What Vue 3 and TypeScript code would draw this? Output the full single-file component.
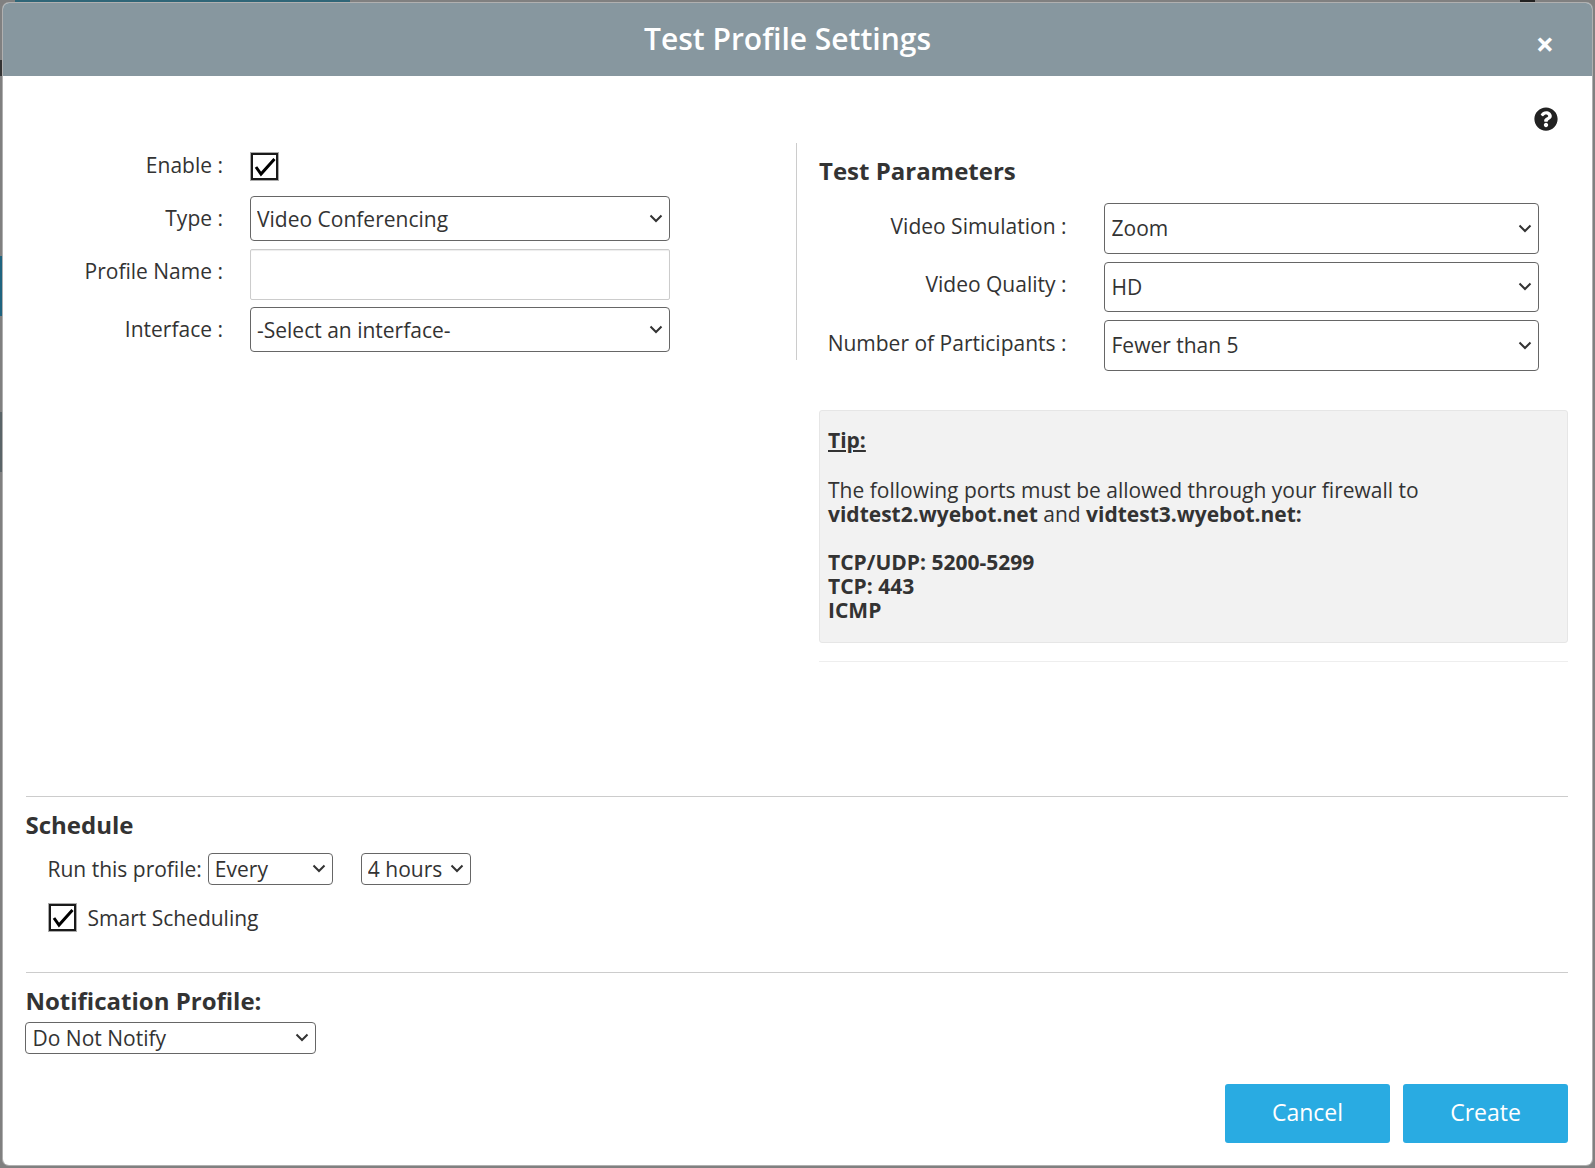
<script setup lang="ts">
import { ref } from 'vue';

const enabled = ref(true);
const smart = ref(true);
const profileName = ref('');

const testTypes = ['Video Conferencing'];
const interfaces = ['-Select an interface-'];

// 右侧参数
const params = [
  { label: 'Video Simulation :', value: 'Zoom' },
  { label: 'Video Quality :', value: 'HD' },
  { label: 'Number of Participants :', value: 'Fewer than 5' },
];
</script>

<template>
  <div class="backdrop">
    <div class="modal">
      <div class="modal-header">
        <h2 class="modal-title">Test Profile Settings</h2>
        <button class="close" type="button">×</button>
      </div>

      <div class="modal-body">
        <div class="help-row">
          <svg class="help-icon" viewBox="0 0 512 512" xmlns="http://www.w3.org/2000/svg">
            <path fill="currentColor" d="M504 256c0 136.997-111.043 248-248 248S8 392.997 8 256C8 119.083 119.043 8 256 8s248 111.083 248 248zM262.655 90c-54.497 0-89.255 22.957-116.549 63.758-3.536 5.286-2.353 12.415 2.715 16.258l34.699 26.31c5.205 3.947 12.621 3.008 16.665-2.122 17.864-22.658 30.113-35.797 57.303-35.797 20.429 0 45.698 13.148 45.698 32.958 0 14.976-12.363 22.667-32.534 33.976C247.128 238.528 216 254.941 216 296v4c0 6.627 5.373 12 12 12h56c6.627 0 12-5.373 12-12v-1.333c0-28.462 83.186-29.647 83.186-106.667 0-58.002-60.165-102-116.531-102zM256 338c-25.365 0-46 20.635-46 46 0 25.364 20.635 46 46 46s46-20.636 46-46c0-25.365-20.635-46-46-46z"/>
          </svg>
        </div>

        <div class="columns">
          <!-- 左侧基本信息 -->
          <div class="left-col">
            <label class="form-label label-enable">Enable :</label>
            <input v-model="enabled" class="check" type="checkbox" />

            <label class="form-label label-type">Type :</label>
            <select class="field field-sm">
              <option v-for="t in testTypes" :key="t">{{ t }}</option>
            </select>

            <label class="form-label label-name">Profile Name :</label>
            <input v-model="profileName" class="text-input" type="text" />

            <label class="form-label label-iface">Interface :</label>
            <select class="field field-sm">
              <option v-for="i in interfaces" :key="i">{{ i }}</option>
            </select>
          </div>

          <!-- 右侧测试参数 -->
          <div class="right-col">
            <h3 class="params-title">Test Parameters</h3>
            <div class="params-grid">
              <template v-for="p in params" :key="p.label">
                <label class="form-label param-label">{{ p.label }}</label>
                <select class="field field-lg">
                  <option>{{ p.value }}</option>
                </select>
              </template>
            </div>

            <div class="tip">
              <div class="tip-title">Tip:</div>
              <br />
              The following ports must be allowed through your firewall to<br />
              <b>vidtest2.wyebot.net</b> and <b>vidtest3.wyebot.net:</b><br />
              <br />
              <b>TCP/UDP: 5200-5299</b><br />
              <b>TCP: 443</b><br />
              <b>ICMP</b>
            </div>
            <hr class="tip-rule" />
          </div>
        </div>

        <div class="lower">
          <hr class="rule" />
          <h3 class="schedule-title">Schedule</h3>
          <div class="run-row">
            <span>Run this profile:</span>
            <select class="field field-xs every">
              <option>Every</option>
            </select>
            <select class="field field-xs hours">
              <option>4 hours</option>
            </select>
          </div>
          <label class="smart-row">
            <input v-model="smart" class="check" type="checkbox" />
            <span class="smart-text">Smart Scheduling</span>
          </label>

          <hr class="rule rule-notify" />
          <h3 class="notify-title">Notification Profile:</h3>
          <select class="field field-xs notify">
            <option>Do Not Notify</option>
          </select>
        </div>

        <div class="actions">
          <button class="btn" type="button">Cancel</button>
          <button class="btn" type="button">Create</button>
        </div>
      </div>
    </div>
  </div>
</template>

<style>
html,
body {
  margin: 0;
  background: #808080;
}
</style>

<style scoped>
/* 背后页面透出的部分 */
.backdrop {
  width: 1595px;
  height: 1168px;
  box-sizing: border-box;
  padding: 3px 3px 0;
  background:
    linear-gradient(to right, #808080 15px, #2f6678 15px, #2f6678 350px, #808080 350px, #808080 1520px, #222 1520px, #222 1535px, #808080 1535px) 0 0 / 100% 2px no-repeat,
    linear-gradient(to bottom, #808080 60px, #333 60px, #333 76px, #808080 76px, #808080 256px, #1f6480 256px, #1f6480 316px, #808080 316px, #808080 412px, #5a6468 412px, #5a6468 472px, #808080 472px) 0 0 / 2px 100% no-repeat,
    #808080;
  font-family: "Open Sans", "Noto Sans", sans-serif;
  font-size: 21px;
  line-height: 24px;
  color: #333;
  overflow: hidden;
}

.modal {
  width: 1589px;
  height: 1162px;
  box-sizing: border-box;
  background: #fff;
  border-radius: 6px;
  box-shadow: 0 0 0 1px #b0b0b0;
  overflow: hidden;
}

.modal-header {
  position: relative;
  height: 73px;
  padding-right: 20px;
  background: #87979f;
  display: flex;
  align-items: center;
  justify-content: center;
}

.modal-title {
  margin: 0;
  font-size: 30px;
  line-height: 36px;
  font-weight: 600;
  color: #fff;
  transform: translateY(-1px);
}

.close {
  position: absolute;
  right: 38px;
  top: 23px;
  padding: 0;
  border: none;
  background: none;
  color: #fff;
  font-family: inherit;
  font-size: 32px;
  line-height: 36px;
  font-weight: 700;
}

.modal-body {
  padding: 0 24px 0 1px;
}

.help-row {
  display: flex;
  justify-content: flex-end;
  height: 67px;
  padding: 31px 10px 0 0;
  box-sizing: border-box;
}

.help-icon {
  width: 24px;
  height: 24px;
  color: #222;
}

.columns {
  display: flex;
  align-items: flex-start;
}

.left-col {
  box-sizing: border-box;
  width: 793px;
  padding-top: 9px;
  padding-bottom: 8px;
  border-right: 1px solid #ccc;
  display: grid;
  grid-template-columns: 219px 420px;
  column-gap: 27px;
  align-items: start;
}

.form-label {
  text-align: right;
}

.label-enable {
  padding-top: 1px;
}

.label-type {
  margin-top: 10px;
}

.label-name {
  margin-top: 10px;
}

.label-iface {
  margin-top: 10px;
}

.check {
  appearance: none;
  box-sizing: border-box;
  display: block;
  width: 29px;
  height: 29px;
  margin: 0;
  border: 3px solid #1a1a1a;
  outline: 1px solid #aaa;
  outline-offset: -1px;
  background: #fff;
}

.check:checked {
  background: #fff url("data:image/svg+xml,%3Csvg xmlns='http://www.w3.org/2000/svg' viewBox='0 0 29 29'%3E%3Cpath d='M6 15l5 7L24.5 7' fill='none' stroke='%23000' stroke-width='3'/%3E%3C/svg%3E") center / 29px 29px no-repeat;
  background-origin: border-box;
}

.left-col .check {
  margin-bottom: 15px;
}

.field {
  appearance: none;
  box-sizing: border-box;
  display: block;
  margin: 0;
  padding: 0 30px 0 6px;
  border: 1px solid #666;
  border-radius: 4px;
  background: #fff url("data:image/svg+xml,%3Csvg xmlns='http://www.w3.org/2000/svg' viewBox='0 0 14 9'%3E%3Cpath d='M1.5 1.5L7 7l5.5-5.5' fill='none' stroke='%23333' stroke-width='2'/%3E%3C/svg%3E") right 6px center / 14px 9px no-repeat;
  color: #333;
  font-family: inherit;
  font-size: 21px;
}

.field-sm {
  width: 100%;
  height: 45px;
}

.left-col .field-sm:nth-of-type(1) {
  margin-bottom: 8px;
}

.text-input {
  box-sizing: border-box;
  display: block;
  width: 100%;
  height: 51px;
  margin-bottom: 7px;
  border: 1px solid #ccc;
  border-radius: 2px;
  box-shadow: inset 0 1px 1px rgba(0, 0, 0, 0.075);
}

.right-col {
  box-sizing: border-box;
  width: 771px;
  padding-left: 22px;
}

.params-title {
  margin: 14px 0 0;
  font-size: 24px;
  line-height: 28px;
  font-weight: 700;
}

.params-grid {
  display: grid;
  grid-template-columns: 247.5px 435px;
  column-gap: 37px;
  row-gap: 8px;
  margin-top: 18px;
  align-items: start;
}

.param-label {
  padding-top: 10.5px;
}

.field-lg {
  width: 100%;
  height: 50.5px;
  padding-left: 7px;
  background-position: right 6px center;
  line-height: 30px;
}

.tip {
  margin-top: 39px;
  padding: 17px 19px 20px 8px;
  border: 1px solid #e6e6e6;
  border-radius: 3px;
  background: #f2f2f2;
}

.tip-title {
  margin-bottom: 2px;
  font-weight: 700;
  text-decoration: underline;
}

.tip-rule {
  margin: 18px 0 0;
  border: none;
  border-top: 1px solid #eee;
}

.lower {
  padding-left: 21.5px;
}

.rule {
  margin: 134px 0 0;
  border: none;
  border-top: 1px solid #ccc;
}

.schedule-title {
  margin: 14px 0 0;
  font-size: 24px;
  line-height: 28px;
  font-weight: 700;
}

.run-row {
  display: flex;
  align-items: center;
  margin-top: 14px;
  padding-left: 22px;
}

.field-xs {
  height: 32px;
  background-position: right 6px center;
}

.every {
  width: 125px;
  margin-left: 6px;
}

.hours {
  width: 110px;
  margin-left: 28px;
  padding-right: 20px;
}

.smart-row {
  display: flex;
  align-items: center;
  gap: 10.5px;
  margin-top: 18px;
  padding-left: 22.5px;
}

.smart-text {
  padding-top: 2px;
}

.rule-notify {
  margin-top: 40px;
}

.notify-title {
  margin: 13px 0 0;
  font-size: 24px;
  line-height: 30px;
  font-weight: 700;
}

.notify {
  width: 291px;
  margin: 6px 0 0 -1px;
  padding-left: 7px;
}

.actions {
  display: flex;
  justify-content: flex-end;
  gap: 13px;
  margin-top: 30px;
}

.btn {
  width: 165px;
  height: 59px;
  padding: 0 0 2px;
  border: none;
  border-radius: 3px;
  background: #29abe2;
  color: #fff;
  font-family: inherit;
  font-size: 23px;
}
</style>
